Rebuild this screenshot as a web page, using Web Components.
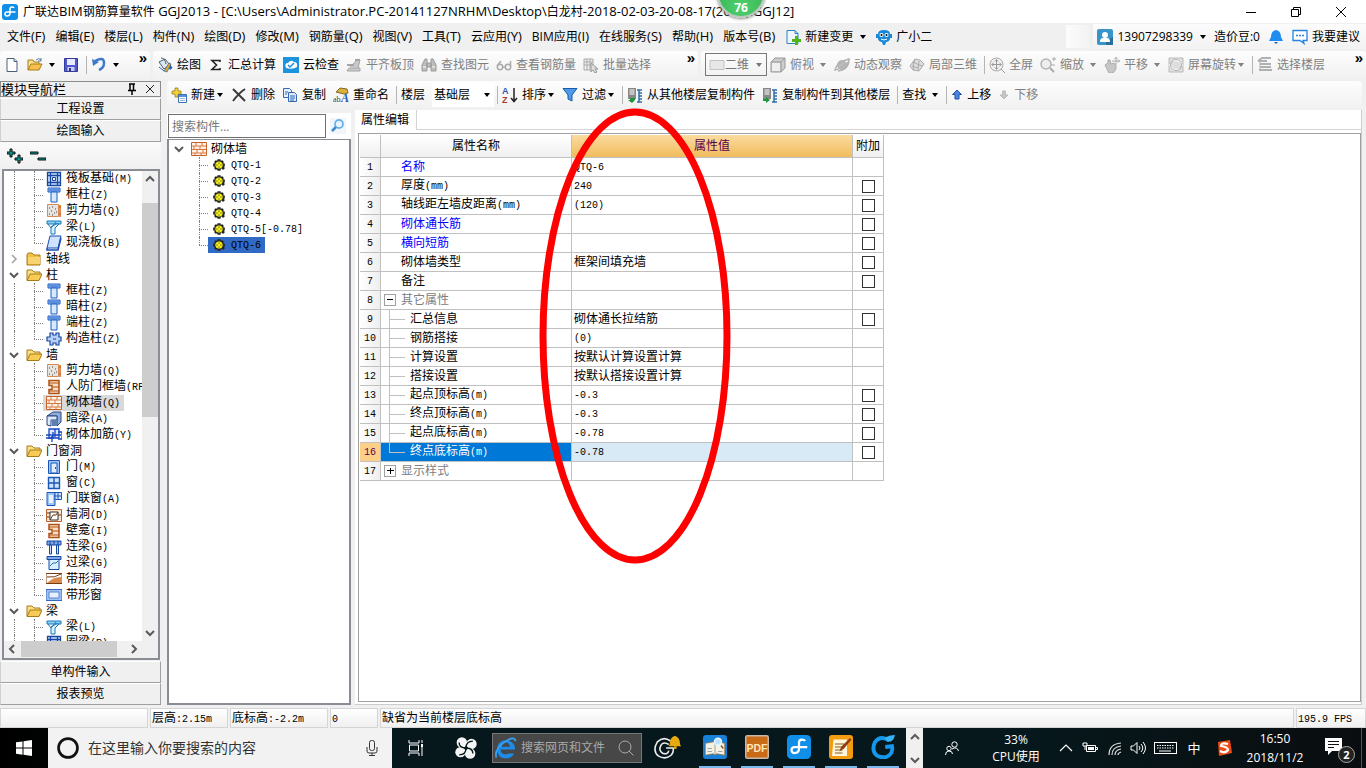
<!DOCTYPE html>
<html lang="zh-CN">
<head>
<meta charset="utf-8">
<title>广联达BIM钢筋算量软件 GGJ2013</title>
<style>
html, body { margin: 0; height: 100%; }
body { font: 12px/16px "Open Sans", "Noto Sans CJK SC", sans-serif; color: #000; background: #f0f0f0; overflow: hidden; }
</style>
</head>
<body>
<app-shell></app-shell>
<script>
const ARROW = (x, y, c = '#5a5a5a') => `<path d="M${x} ${y}l4 4 4-4" fill="none" stroke="${c}" stroke-width="2"/>`;
const COLUMN = '<path d="M2 1h12v4H2z" fill="#9cc0f5" stroke="#1f5fc4"/><path d="M5 5h6v10H5z" fill="#d8e8ff" stroke="#1f5fc4"/><path d="M3 3h10" stroke="#1f5fc4"/>';
const SHEET = '<path d="M1 1h8v11H1z" fill="#888"/><path d="M2.500 3h5M2.500 5h5M2.500 7h5" stroke="#fff"/><path d="M10 3h2v12h-2M12 3h3M12 6h3M12 9h3M12 12h3M12 15h3" fill="none" stroke="#2f6ea8" stroke-width="1.500"/>';
const ICONS = {
  logo: '<rect width="16" height="16" rx="3" fill="#0f8fe8"/><path d="M13.500 8H5a2 2 0 0 0 0 4q3 0 3-3V5q0-2 2-2 1.500 0 2 1" fill="none" stroke="#fff" stroke-width="1.500"/>',
  newdoc: '<path d="M3 1.500h7l3 3v10H3z" fill="#fff" stroke="#4b5f7d"/><path d="M10 1.500v3h3" fill="#dce6f5" stroke="#4b5f7d"/>',
  open: '<path d="M1 13V3h5l1 2h5v3" fill="#fbe08a" stroke="#a87d1c"/><path d="M1 13l3-6h11l-3 6z" fill="#f7c04c" stroke="#a87d1c"/><path d="M9 3q3-3 5 0M14 1v3h-3" fill="none" stroke="#5a7a9a"/>',
  save: '<path d="M1.500 1.500h13v13h-13z" fill="#5057c8" stroke="#343a9c"/><path d="M4 2h8v6H4z" fill="#e6eaff"/><path d="M4.500 10h7v4h-7z" fill="#c8ccf0"/><path d="M6 11h2v3H6z" fill="#2d327e"/>',
  undo: '<path d="M4 4q9-5 9 2 0 5-5 7" fill="none" stroke="#4079c9" stroke-width="2.500"/><path d="M1 2l1 7 6-4z" fill="#4079c9"/>',
  paint: '<path d="M2 5l6-3 5 6-6 4z" fill="#dce6ee" stroke="#4a5f70"/><path d="M4 1q4 0 5 6" fill="none" stroke="#4a5f70"/><path d="M13 8q3 3 1 4-3 1-1-4zM2 10l5 4" fill="#1d63c4" stroke="#1d63c4"/><path d="M7 14l5-8 2 1-4 8z" fill="#e1ab35" stroke="#2f5f9c" stroke-width=".7"/>',
  sigma: '<path d="M12 5V3.500H4l4.500 4.500L4 12.500h8V11" fill="none" stroke="#222" stroke-width="1.600"/>',
  cloud: '<rect width="16" height="16" fill="#1b93dd"/><path d="M3 11q-2-5 2-5 3-4 6-1 4 0 3 5-4 3-11 1z" fill="#fff"/><path d="M5 8l2 2 4-4" fill="none" stroke="#1b93dd" stroke-width="1.500"/>',
  level: '<path d="M1 14h13v-3H3zM4 10l8-8 2 1-2 8" fill="#c9c9c9" stroke="#a5a5a5"/><path d="M1 8h7M9 3h5" stroke="#a5a5a5" stroke-width="2"/>',
  find: '<path d="M1 14V8l3-6h2v12zM10 14V2h2l3 6v6zM6 6h4v4H6z" fill="#bdbdbd" stroke="#9a9a9a"/><path d="M2 10h3M11 10h3" stroke="#fff"/>',
  glasses: '<circle cx="4" cy="10" r="2.700" fill="none" stroke="#aaa" stroke-width="1.500"/><circle cx="12" cy="10" r="2.700" fill="none" stroke="#aaa" stroke-width="1.500"/><path d="M7 10h2M1 9l4-5M14.500 9V4" fill="none" stroke="#aaa" stroke-width="1.500"/>',
  batch: '<path d="M1 2h9v11H1zM1 5h9M1 8h9M4 2v11M7 2v11" fill="#eee" stroke="#aaa"/><path d="M8 6l7 6-3 0 2 3-2 1-2-3-2 2z" fill="#ddd" stroke="#999"/>',
  rect: '<path d="M1 3.500h14v9H1z" fill="#e7e7e7" stroke="#c2c2c2"/>',
  cube: '<path d="M1 5l4-4h10v10l-4 4H1z" fill="#cdcdcd" stroke="#999"/><path d="M1 5h10v10M11 5l4-4" fill="none" stroke="#999"/><path d="M2 6h8v8H2z" fill="#efefef"/>',
  orbit: '<circle cx="8" cy="8" r="5" fill="#bbb"/><path d="M1 13Q3 5 15 2q1 4-9 9-3 2-5 2zM4 14q9-1 11-9" fill="none" stroke="#b0b0b0" stroke-width="1.500"/>',
  grid3d: '<path d="M1 9l5-7 5 1 4 4-5 7-6-1z" fill="#dedede" stroke="#aaa"/><path d="M4 5l6 3 4 1M3 9l6 2M6 2l-2 7 1 4M10 4l-1 9" fill="none" stroke="#aaa"/>',
  full: '<circle cx="7.500" cy="7.500" r="6.500" fill="#f0f0f0" stroke="#aaa"/><path d="M7.500 3v9M3 7.500h9M6 4.500l1.500-2 1.500 2M6 10.500l1.500 2 1.500-2M4.500 6l-2 1.500 2 1.500M10.500 6l2 1.500-2 1.500M12 12l4 4" fill="none" stroke="#999"/>',
  zoom: '<circle cx="6" cy="7" r="5" fill="#eee" stroke="#b5b5b5" stroke-width="1.500"/><path d="M10 11l4 4" stroke="#aaa" stroke-width="2"/><path d="M12 2h4M14 0v4M11 8h4" stroke="#aaa"/>',
  pan: '<path d="M1 8l3-2v-3l2 0 1 4 3-1 2 3v3l-3 4H5z" fill="#c6c6c6" stroke="#aaa"/><path d="M12 0v8M8 4h8M10.500 2L12 .5 13.500 2M14 2.500L15.500 4 14 5.500" fill="none" stroke="#aaa"/>',
  rotate: '<path d="M1 1h14v14H1z" fill="#ddd" stroke="#bbb"/><path d="M5 4q5-3 8 2l1 3M11 12q-5 3-8-2L2 7" fill="none" stroke="#fff" stroke-width="2"/><circle cx="8" cy="8" r="5.500" fill="none" stroke="#aaa"/>',
  layers: '<path d="M1 4l4-3h9M1 4h9M3 7h11M3 10h11M2 13h13" fill="none" stroke="#b0b0b0" stroke-width="2"/><path d="M3 4v10" stroke="#b0b0b0"/>',
  add: '<path d="M4 1h3v3h3v3H7v3H4V7H1V4h3z" fill="#f2d23a" stroke="#9a7a10" stroke-width=".8"/><path d="M7.500 7.500h8v8h-8z" fill="#fff" stroke="#3f6fae"/><path d="M8 8h7v2H8z" fill="#5a91d8"/><path d="M9 11.500h5M9 13.500h5" stroke="#9ab5d8"/>',
  del: '<path d="M2 2l12 12M14 2Q8 6 2 14" fill="none" stroke="#3a3a3a" stroke-width="2"/>',
  copy: '<path d="M1.500 1.500h6l2 2v7h-8z" fill="#e8f1ff" stroke="#3566b4"/><path d="M6.500 5.500h6l2 2v7h-8z" fill="#dbe8ff" stroke="#3566b4"/><path d="M8 9h5M8 11h5M8 13h4M3 5h3M3 7h2" stroke="#3566b4"/>',
  rename: '<path d="M3 5l4-4 7 1 1 4-4 1z" fill="#d9b13f" stroke="#88651c"/><text x="0" y="15" font-size="8" font-family="Liberation Serif" fill="#444">ab</text><text x="8" y="15" font-size="12" font-weight="bold" font-style="italic" font-family="Liberation Serif" fill="#1c59b8">A</text>',
  sort: '<text x="0" y="7" font-size="9" font-weight="bold" font-family="Liberation Sans" fill="#3059b0">A</text><text x="0" y="16" font-size="9" font-weight="bold" font-family="Liberation Sans" fill="#a33b33">Z</text><path d="M12 1v13M9 11l3 3.500 3-3.500" fill="none" stroke="#222" stroke-width="1.500"/>',
  filter: '<path d="M1 1.500h14L10 8v6l-4-2V8z" fill="#4d9be8" stroke="#1b5ca8"/>',
  pull: SHEET + '<path d="M8 11v2l-3 3-4-3h2v-2z" fill="#20913c"/>',
  push: SHEET + '<path d="M1 12h3v-2l4 3-4 3v-2H1z" fill="#20913c"/>',
  up: '<path d="M6 3l4.500 4.500H8V12H4V7.500H1.500z" fill="#4a86e0" stroke="#1d4fa8"/>',
  down: '<path d="M6 12l4-4H7.500V4h-3v4H2z" fill="#c5c5c5" stroke="#bbb"/>',
  change: '<path d="M2 1.500h8l3 3v10H2z" fill="#eef7ff" stroke="#2a83c0"/><path d="M10 1.500v3h3" fill="none" stroke="#2a83c0"/><path d="M10 7h3v3h3v3h-3v3h-3v-3H7v-3h3z" fill="#52b513"/>',
  robot: '<path d="M2 5q0-4 6-4t6 4v5q-1 3-4 3l-1 3H7l-1-3q-3 0-4-3z" fill="#1787d9"/><path d="M0 5h2v4H0zM14 5h2v4h-2z" fill="#1787d9"/><circle cx="5.500" cy="6" r="2" fill="#fff"/><circle cx="10.500" cy="6" r="2" fill="#fff"/><circle cx="5.500" cy="6" r="1"/><circle cx="10.500" cy="6" r="1"/><path d="M5 10q3 2 6 0" fill="none" stroke="#fff"/>',
  user: '<rect width="16" height="16" rx="2" fill="#3795c9"/><path d="M9 12l7-4v8h-7z" fill="#27719c"/><circle cx="8" cy="6" r="3" fill="#fff"/><path d="M3 13q0-4 3-4h4q3 0 3 4z" fill="#fff"/>',
  bell: '<path d="M8 1q5 1 5 7l2 4H1l2-4Q3 2 8 1z" fill="#1f8cf0"/><path d="M6 13h4l-2 2z" fill="#1766b4"/>',
  bubble: '<path d="M1 1.500h14v10h-4l1 3-4-3H1z" fill="#fff" stroke="#2585e0" stroke-width="1.300"/><path d="M4 6.500h2M7 6.500h2M10 6.500h2" stroke="#2585e0" stroke-width="1.500"/>',
  plus2: '<path d="M3 1h2v3h3v2H5v3H3V6H0V4h3zM11 7h2v3h3v2h-3v3h-2v-3H8v-2h3z" fill="#0a9a92" stroke="#111"/>',
  minus2: '<path d="M0 4h8v2H0zM8 10h8v2H8z" fill="#0a9a92" stroke="#111"/>',
  pin: '<path d="M5 3h6M6 3v6M9.500 3v6M4 9.500h8M8 10v4" stroke="#000" stroke-width="1.500" fill="none"/>',
  close: '<path d="M4 4l8 8M12 4l-8 8" stroke="#222" fill="none"/>',
  search: '<circle cx="9" cy="6" r="4" fill="#e8f4ff" stroke="#6ab4e8" stroke-width="1.800"/><path d="M6 9l-4 4" stroke="#3b8bd0" stroke-width="2.500"/>',
  folder: '<path d="M1 4q0-2 2-2h3l2 2h6v10H1z" fill="#f1bf43" stroke="#a77b15"/><path d="M2 6h12v7H2z" fill="#f8d471"/>',
  folderopen: '<path d="M1 13V3h5l2 2h6v2" fill="#fbdf87" stroke="#a77b15"/><path d="M1 13.500L4 7h12l-3 6.500z" fill="#f7cb55" stroke="#a77b15"/>',
  raft: '<path d="M1.500 1.500h13v13h-13zM4.500 1v14M11.500 1v14M1 4.500h14M1 11.500h14" fill="#cfe2ff" stroke="#1747a0" stroke-width="1.300"/><path d="M6.500 6.500h3v3h-3z" fill="#fff" stroke="#1747a0"/>',
  column: COLUMN,
  shear: '<path d="M1.500 1.500h11v12h-11z" fill="#e8e4e0" stroke="#d88a55"/><path d="M3 5h1M6 4h1M9 6h1M5 8h1M8 10h1M3 11h1M10 9h1M6 12h1" stroke="#444"/><path d="M14 2v12M13 4h2M13 11h2" stroke="#d96a1c" stroke-width="1.500"/>',
  beam: '<path d="M1 2h14v3H1z" fill="#8bd0f5" stroke="#1d78b8"/><path d="M5 15V8l5-3h3L9 9v6z" fill="#d8f1ff" stroke="#1d78b8"/><path d="M2 5l3 4 5-6" fill="none" stroke="#1d78b8"/>',
  slab: '<path d="M4 1h11l-3 12H1z" fill="#cfe2ff" stroke="#1b4fb0"/><path d="M1 13v2h11l3-12" fill="none" stroke="#1b4fb0" stroke-width="1.500"/>',
  tiecol: '<path d="M4 2h3v2h3V2h3v4h2v4h-2v4h-3v-2H7v2H4v-4H1V6h3z" fill="#b8d0f8" stroke="#1747a0" stroke-width="1.200"/><path d="M7 8h3" stroke="#1747a0"/>',
  defwall: '<path d="M3 1.500h10v13H3v-4h3v-4H3z" fill="#f7dfc4" stroke="#b05012" stroke-width="1.500"/><path d="M3 4h10M7 8h6M3 12h10" stroke="#b05012"/>',
  brick: '<path d="M.5 1.500h15v13H.5z" fill="#fff3ea" stroke="#c4622a"/><path d="M1 5h14M1 8.500h14M1 12h14M5 2v3M11 2v3M3 5v3.500M9 5v3.500M6 9v3M12 9v3M4 12v2M10 12v2" stroke="#d9763c"/>',
  hbeam: '<path d="M1 5l6-4h8v10l-4 4V5z" fill="#8fadd8" stroke="#2b4780"/><path d="M1 5h10v4H5v6l-4-1z" fill="#dce9fb" stroke="#2b4780"/><path d="M6 9h5v6H6z" fill="#5f7fb0"/>',
  rebar: '<path d="M3 2h10v9H3z" fill="#dce9ff" stroke="#1747c0" stroke-width="1.300"/><path d="M0 11h7V5M6 15V8h9M9 2v8M0 8h5M12 5h4v7h-4" fill="none" stroke="#1747c0" stroke-width="1.300"/>',
  door: '<path d="M2.500 1.500h11v13h-11z" fill="#9cc4f8" stroke="#1b56b8"/><path d="M5 4h6v10H5z" fill="#e0edff" stroke="#1b56b8"/><path d="M9 8h1v2H9z" fill="#1b56b8"/>',
  window: '<path d="M2.500 2.500h11v11h-11zM8 2v12M2 8h12" fill="#cfe2ff" stroke="#1b56b8" stroke-width="1.400"/>',
  doorwin: '<path d="M1 1.500h8v13H1z" fill="#9cc4f8" stroke="#1b56b8"/><path d="M3 4h4v8H3z" fill="#e8f2ff"/><path d="M9 1.500h6.500v7H9zM12 2v6M9 5h6" fill="#cfe2ff" stroke="#1b56b8"/>',
  wallhole: '<path d="M.5 2.500h15v12H.5z" fill="#fbe4cf" stroke="#b5622e"/><path d="M4 5h8v8H4z" fill="#fff" stroke="#333"/><path d="M4 13l3-5h3l2-3M1 6h3M1 10h3M12 8h3" fill="none" stroke="#6b3410"/>',
  link: '<path d="M1 2h14v4H1z" fill="#7fa8ea" stroke="#1747a0"/><path d="M3.500 6h2v9h-2zM10.500 6h2v9h-2z" fill="#cfe2ff" stroke="#1747a0"/><path d="M4 2v4M8 2v4M12 2v4" stroke="#1747a0"/>',
  lintel: '<path d="M1 1.500h14v3H1z" fill="#7fa8ea" stroke="#1747a0"/><path d="M3 4.500h10v10H3z" fill="#d8f0ff" stroke="#1747a0"/><path d="M4 11l3-3h3l2-2" fill="none" stroke="#1d78b8"/>',
  striphole: '<path d="M0 2.500h16v10H0z" fill="#fff" stroke="#7a3a12"/><path d="M1 12q6-6 14-6v6z" fill="#d98a4b"/><path d="M1 6q8 1 14-3" stroke="#7a3a12" fill="none"/>',
  stripwin: '<path d="M0 2.500h16v11H0z" fill="#9cc0f0" stroke="#3a66c0"/><path d="M3 5h10v6H3z" fill="#e6f1ff" stroke="#5a86d0"/>',
  gear: '<path d="M7 3h2v10H7zM3 7h10v2H3zM4 5l1-1 8 7-1 1zM4 11l7-7 1 1-7 7z" fill="#f4ee19" stroke="#222" stroke-width="1.600" stroke-linejoin="round"/><circle cx="8" cy="8" r="3.600" fill="#f4ee19"/><path d="M7.500 5.500h1v1h-1zM5.500 7.500h1v1h-1zM9.500 7.500h1v1h-1zM7.500 9.500h1v1h-1z" fill="#222"/>',
  chevdown: ARROW(4, 6), chevup: '<path d="M4 10l4-4 4 4" fill="none" stroke="#5a5a5a" stroke-width="2"/>',
  chevleft: '<path d="M10 4L6 8l4 4" fill="none" stroke="#5a5a5a" stroke-width="2"/>', chevright: '<path d="M6 4l4 4-4 4" fill="none" stroke="#5a5a5a" stroke-width="2"/>',
  collapsed: '<path d="M6 4l4 4-4 4" fill="none" stroke="#a0a0a0" stroke-width="1.500"/>',
  min: '<path d="M3 8.500h10" stroke="#000"/>', max: '<path d="M3.500 5.500h7v7h-7zM5.500 5V3.500h7v7H11" fill="none" stroke="#000"/>', x: '<path d="M3 3l10 10M13 3L3 13" stroke="#000" fill="none"/>',
  start: '<path d="M0 2.300L6.500 1.400v6.200H0zM7.500 1.200L16 0v7.600H7.500zM0 8.500h6.500v6.200L0 13.800zM7.500 8.500H16V16l-8.500-1.200z" fill="#fff"/>',
  cortana: '<circle cx="8" cy="8" r="6.300" fill="none" stroke="#111" stroke-width="1.800"/>',
  mic: '<rect x="5.500" y=".5" width="5" height="10" rx="2" fill="none" stroke="#333"/><path d="M3 7v4q0 2 2 2h6q2 0 2-2V7M8 13v3M5 15.500h6" fill="none" stroke="#333"/>',
  taskview: '<path d="M1 0v3h10V0M1 16v-3h10v3M1.500 5h9v6h-9zM14 0v3M14 7v9" fill="none" stroke="#fff"/><path d="M13 4h2v3h-2z" fill="#fff"/>',
  swirl: '<circle cx="5" cy="4" r="3.800" fill="#f5f5f5"/><circle cx="12" cy="5" r="3.800" fill="#f5f5f5"/><circle cx="11" cy="12" r="3.800" fill="#f5f5f5"/><circle cx="4" cy="11" r="3.800" fill="#f5f5f5"/><path d="M8 8Q3 8 3 4M8 8q0-5 5-5M8 8q5 0 5 4M8 8q0 5-5 5" fill="none" stroke="#06171b"/>',
  ie: '<path d="M14.500 9H4q1 5 6 3l4 0q-3 5-9 3Q0 12 2 6q3-5 9-3 4 2 3.500 6zM5 7h6q-1-3-3-3-3 0-3 3z" fill="#1e8be8" fill-rule="evenodd"/><path d="M1 15Q-1 9 8 3q6-4 7 0" fill="none" stroke="#35a2f3" stroke-width="1.300"/>',
  mag: '<circle cx="7" cy="7" r="6" fill="none" stroke="#aaa"/><path d="M11 11l4.500 4.500" stroke="#aaa"/>',
  gbell: '<g fill="none" stroke="#eee" stroke-width=".9"><path d="M10 4Q6 1 2.500 4.500q-3 5 .5 8 4 2.500 7.500-.5 1.500-2 1-4H7.500"/><path d="M9 6Q6 4 4.500 6.500q-1.500 3 1 4.500 3 1 3.500-1.500"/></g><path d="M9.500 6q0-4 3-5 3 1 3 5l.5 1H9z" fill="#e7a90e"/><path d="M12 7h1.500v1.500H12z" fill="#e7a90e"/>',
  book: '<rect width="16" height="16" rx="2" fill="#1781da"/><path d="M1.500 5.500l5.500-1 1 1 1-1 5.500 1v8l-5.500-1-1 1-1-1-5.500 1z" fill="#f4f1e5" stroke="#8b6a34" stroke-width=".5"/><path d="M8 5v8M3 9h3M3 11h3M10 11h3" stroke="#888" stroke-width=".5"/><circle cx="10" cy="4.500" r="2.300" fill="#bde2ff" stroke="#e8f6ff"/><path d="M12 7l1.500 2" stroke="#a05a20"/>',
  pdf: '<rect x=".5" y=".5" width="15" height="15" rx="1" fill="#c96a16" stroke="#c8b8a8"/><text x="8" y="11" font-size="7" font-weight="bold" text-anchor="middle" font-family="Liberation Sans" fill="#ffe4bd">PDF</text>',
  note: '<rect width="16" height="16" rx="2" fill="#f59b12"/><path d="M3 3h9v11H2z" fill="#fff6dc"/><path d="M4 6h6M4 8h5M4 10h5M4 12h5" stroke="#8a5a1a" stroke-width=".8"/><path d="M7 11l1-3 6-6 1 1-5 6z" fill="#8d3d10"/>',
  glogo: '<path d="M12 3.500Q6 0 2.500 5q-2.500 6 2 9 6 2.500 9-2 1-2.500 .5-4.500l-4.500 .5" fill="none" stroke="#1597ec" stroke-width="2.600"/><path d="M9 2q3-2 7-2-1 5-5 4.500z" fill="#36b2f5"/>',
  people: '<g fill="none" stroke="#fff"><circle cx="10.500" cy="4.500" r="2.700"/><circle cx="5" cy="8.500" r="2.200"/><path d="M1.500 15q0-4 3.500-4t3.500 3M8 9q5-3 6.500 2"/></g>',
  tray: '<path d="M2 11l6-6 6 6" fill="none" stroke="#fff" stroke-width="1.200"/>',
  battery: '<path d="M4.500 5.500h9v6h-9zM14 7.500h1.500v2H14" fill="none" stroke="#fff"/><path d="M6 7h6v3H6z" fill="#fff"/><path d="M1 3v3h4V3M2 4V2M4 4V2M3 6v4" fill="none" stroke="#fff"/>',
  wifi: '<path d="M3 15Q3 4 15 3M6 15q0-8 9-9M9 15q0-5 6-6M12 15q0-2 3-3" fill="none" stroke="#ddd" stroke-width="1.200"/>',
  volume: '<path d="M1 6h2.500L7 2.500v11L3.500 10H1z" fill="none" stroke="#fff"/><path d="M9 6q2 2 0 4M11 4q3.500 4 0 8M13 2q5 6 0 12" fill="none" stroke="#fff"/>',
  sogou: '<path d="M2 2l12-2 2 13-13 3z" fill="#f04a14"/><path d="M12 4Q5 2 5 6q7 1 7 4-3 4-8 1" fill="none" stroke="#fff" stroke-width="2.200"/>',
};
const WIDE = {
  keyboard: ['0 0 24 16', '<rect x=".5" y="2.500" width="22" height="11" fill="none" stroke="#fff"/><path d="M3 5.500h17M3 8h17" stroke="#fff" stroke-width="1.200" stroke-dasharray="1.500 1"/><path d="M5 11h12" stroke="#fff"/>'],
  action: ['0 0 24 24', '<path d="M1 2h17v13H8l-4 4v-4H1z" fill="#fff"/><path d="M4 5.500h11M4 8.500h11M4 11.500h6" stroke="#111"/>'],
};

/* Registers an element whose shadow root is cloned from a template. */
function define(name, css, html, setup) {
  const tpl = document.createElement('template');
  tpl.innerHTML = `<style>*{box-sizing:border-box}button,input,select{font:inherit;color:inherit;margin:0}${css}</style>${typeof html === 'string' ? html : ''}`;
  customElements.define(name, class extends HTMLElement {
    constructor() { super(); this.attachShadow({ mode: 'open' }).append(tpl.content.cloneNode(true)); }
    connectedCallback() {
      if (this.ready) return;
      this.ready = true;
      if (typeof html === 'function') this.shadowRoot.append(document.createRange().createContextualFragment(html(this)));
      if (setup) setup(this);
    }
  });
}
/* Wraps the Latin runs of a label, which take another size than the CJK text. */
const latin = t => t.replace(/[\x20-\x7e]+/g, m => `<span class="l">${m}</span>`);
const SONG = '.l{font-family:"Liberation Mono",monospace;font-size:10px}';
const UI = '.l{font-size:13px}';

define('app-icon', ':host{display:block;flex:none;width:16px;height:16px}:host([size="24"]){width:24px;height:24px}:host([size="22"]){width:22px;height:22px}:host([size="28"]){width:28px;height:28px}:host([size="wide"]){width:24px;height:16px}:host([size="12"]){width:12px}svg{display:block;width:100%;height:100%}',
  e => { const n = e.getAttribute('name'), w = WIDE[n]; return `<svg viewBox="${w ? w[0] : e.getAttribute('size') === '12' ? '0 0 12 16' : '0 0 16 16'}" aria-hidden="true">${w ? w[1] : ICONS[n] || ''}</svg>`; });
const ic = (n, s) => `<app-icon name="${n}"${s ? ` size="${s}"` : ''}></app-icon>`;

define('title-bar', `:host{display:flex;height:23px;background:#fff;align-items:center;padding:0 3px 0 2px;position:relative}
.caption{margin-left:5px;flex:1;white-space:pre}${UI}
button{width:45px;height:22px;border:0;background:none;display:grid;place-items:center;padding:0}
.ball{position:absolute;left:717px;top:-30px;width:48px;height:48px;border-radius:50%;background:radial-gradient(circle at 50% 80%,#4fcf6d,#2ea94c);border:2px solid #b9c9bd;box-shadow:0 1px 3px #888;color:#fff;font-weight:bold;display:flex;align-items:flex-end;justify-content:center;z-index:2}`,
  `${ic('logo')}<span class="caption">${latin('广联达BIM钢筋算量软件 GGJ2013 - [C:\\Users\\Administrator.PC-20141127NRHM\\Desktop\\白龙村-2018-02-03-20-08-17(2664).GGJ12]')}</span>
<button aria-label="最小化">${ic('min')}</button><button aria-label="还原">${ic('max')}</button><button aria-label="关闭">${ic('x')}</button><div class="ball">76</div>`);

define('menu-bar', `:host{display:flex;height:27px;align-items:center;padding-left:7px;white-space:nowrap}
button{border:0;background:none;padding:0;height:24px;display:flex;align-items:center;gap:4px}
nav{display:flex;gap:10px;flex:1}
.caret{border:3px solid transparent;border-top:4px solid #000;border-bottom:0;margin:0 0 0 3px}
.blank{width:24px;height:23px;background:linear-gradient(90deg,#fcfcfc,#f2f2f2);margin-right:3px}
.acct{display:flex;gap:8px;height:25px;align-items:center;background:linear-gradient(#fcfcfc,#f2f2f2);padding:0 6px 0 4px}${UI}`,
  `<nav>${['文件(F)', '编辑(E)', '楼层(L)', '构件(N)', '绘图(D)', '修改(M)', '钢筋量(Q)', '视图(V)', '工具(T)', '云应用(Y)', 'BIM应用(I)', '在线服务(S)', '帮助(H)', '版本号(B)'].map(t => `<button><span>${t.replace(/\(.\)/, m => `<span class="l">${m}</span>`)}</span></button>`).join('')}
<button>${ic('change')}新建变更<i class="caret"></i></button><button>${ic('robot')}广小二</button></nav>
<div class="blank"></div><div class="acct"><button>${ic('user')}13907298339<i class="caret"></i></button><button>造价豆:0</button><button aria-label="通知">${ic('bell')}</button><button>${ic('bubble')}我要建议</button></div>`);

define('tool-bar', `:host{display:flex;align-items:center;background:linear-gradient(#fdfdfd,#f0f0f0);height:29px;white-space:nowrap;padding:0 0 2px 4px;border-radius:3px;box-sizing:border-box}
:host([grow]){flex:1}:host([more])::after{content:"»";font:bold 15px/14px "Liberation Sans",sans-serif;align-self:flex-start;margin:0 3px 0 auto}`, '<slot></slot>');
define('tool-sep', ':host{display:block;width:1px;height:18px;background:#b5b5b5;margin:0 4px 0 0;flex:none}', '');
define('tool-button', `:host{display:block;flex:none;margin-right:7px}:host([off]){color:#808080}
button{border:0;background:none;padding:0;display:flex;align-items:center;gap:4px;height:24px}
i{border:3px solid transparent;border-top:4px solid currentColor;border-bottom:0;margin:0 1px 0 -2px}
:host([menu="wide"]) i{margin-left:2px}`,
  e => `<button${e.textContent.trim() ? '' : ` aria-label="${e.getAttribute('label')}"`}>${e.hasAttribute('icon') ? ic(e.getAttribute('icon'), e.hasAttribute('slim') ? '12' : '') : ''}<slot></slot>${e.hasAttribute('menu') ? '<i></i>' : ''}</button>`);
define('tool-select', `:host{display:flex;align-items:center;flex:none;width:62px;height:24px;background:#fff;position:relative;margin-right:3px;padding:0 2px;box-sizing:border-box}
:host([icon]){background:none;border:1px solid #777;height:23px;color:#777;padding:0 2px 0 3px}
select{appearance:none;border:0;background:none;padding:0;flex:1;min-width:0;outline:0;opacity:1}
i{border:3px solid transparent;border-top:4px solid currentColor;border-bottom:0;margin:0 2px}`,
  e => `${e.hasAttribute('icon') ? ic(e.getAttribute('icon')) : ''}<select aria-label="${e.getAttribute('label')}"><option>${e.getAttribute('value')}</option></select><i></i>`);

define('scroll-bar', `:host{display:flex;flex-direction:column;background:#f0f0f0;width:16px}:host([horizontal]){flex-direction:row;width:auto;height:16px}
button{border:0;background:none;padding:0;flex:none;width:16px;height:16px}.thumb{background:#cdcdcd}`,
  e => { const h = e.hasAttribute('horizontal'), [a, b, c] = e.getAttribute('parts').split(' ');
    return `<button aria-label="向前滚动">${ic(h ? 'chevleft' : 'chevup')}</button><div style="flex:${a}"></div><div class="thumb" style="flex:${b}"></div><div style="flex:${c}"></div><button aria-label="向后滚动">${ic(h ? 'chevright' : 'chevdown')}</button>`; });

define('tree-row', `:host{display:flex;height:16px;align-items:center;white-space:nowrap;flex:none}
.a,.b{height:16px;flex:none;position:relative}.a{width:20px}.b{width:17px}
.v::before{content:"";position:absolute;left:8px;top:0;bottom:0;border-left:1px dotted #808080}
.b::after{content:"";position:absolute;left:8px;right:0;top:8px;border-top:1px dotted #808080}
.end::before{bottom:8px}
.label{display:flex;gap:4px;align-items:center;padding:0 4px 0 3px;height:16px}
.top .label{padding:0 4px 0 0}.row{display:flex}
.sel{background:var(--selected,#d9d9d9)}${SONG}`,
  e => { const top = e.hasAttribute('top'), t = latin(e.getAttribute('label'));
    return `<div class="row ${top ? 'top' : ''}" role="treeitem"><div class="a ${!top && e.hasAttribute('guide') ? 'v' : ''}">${top ? ic(e.hasAttribute('closed') ? 'collapsed' : 'chevdown') : ''}</div>${top ? '' : `<div class="b v ${e.hasAttribute('last') ? 'end' : ''}"></div>`}<div class="label ${e.hasAttribute('selected') ? 'sel' : ''}">${ic(e.getAttribute('icon'))}<span>${t}</span></div></div>`; });

const NAV = [['raft', '筏板基础(M)'], ['column', '框柱(Z)'], ['shear', '剪力墙(Q)'], ['beam', '梁(L)'], ['slab', '现浇板(B)', 'last'], ['folder', '轴线', 'top closed'], ['folderopen', '柱', 'top'],
  ['column', '框柱(Z)'], ['column', '暗柱(Z)'], ['column', '端柱(Z)'], ['tiecol', '构造柱(Z)', 'last'], ['folderopen', '墙', 'top'], ['shear', '剪力墙(Q)'], ['defwall', '人防门框墙(RF)'], ['brick', '砌体墙(Q)', 'selected'], ['hbeam', '暗梁(A)'], ['rebar', '砌体加筋(Y)', 'last'],
  ['folderopen', '门窗洞', 'top'], ['door', '门(M)'], ['window', '窗(C)'], ['doorwin', '门联窗(A)'], ['wallhole', '墙洞(D)'], ['defwall', '壁龛(I)'], ['link', '连梁(G)'], ['lintel', '过梁(G)'], ['striphole', '带形洞'], ['stripwin', '带形窗', 'last'],
  ['folderopen', '梁', 'top'], ['beam', '梁(L)'], ['raft', '圈梁(P)']];
const rows = (list, guide) => list.map(([i, t, f = '']) => `<tree-row icon="${i}" label="${t}" ${f} ${guide}></tree-row>`).join('');

define('nav-dock', `:host{display:flex;flex-direction:column;min-height:0;width:161px}
header{display:flex;height:16px;align-items:center;border:1px solid #8c8c8c;font-size:13px;line-height:14px;margin-bottom:1px;overflow:hidden}
header span{flex:1}header button,.strip button{border:0;background:none;padding:0;width:18px;height:16px}
.page{height:22px;border:1px solid #a0a0a0;border-top-color:#fff;border-left-color:#d0d0d0;background:#f0f0f0;padding:0;flex:none}
.strip{height:27px;background:linear-gradient(#fafafa,#f0f0f0);display:flex;gap:5px;align-items:center;padding-left:7px;flex:none}
.box{flex:1;min-height:0;margin:0 1px 1px 2px;border:2px solid #8a8d94;background:#f0f0f0;display:grid;grid-template:minmax(0,1fr) 17px/minmax(0,1fr) 16px}
.tree{overflow:hidden;background:#fff;padding-left:2px;display:flex;flex-direction:column}`,
  `<header><span>模块导航栏</span><button aria-label="固定">${ic('pin')}</button><button aria-label="关闭">${ic('close')}</button></header>
<button class="page">工程设置</button><button class="page">绘图输入</button>
<div class="strip"><button aria-label="全部展开">${ic('plus2')}</button><button aria-label="全部折叠">${ic('minus2')}</button></div>
<div class="box"><div class="tree" role="tree">${rows(NAV, 'guide')}</div><scroll-bar parts="16 214 208"></scroll-bar><scroll-bar horizontal parts="1 95 9"></scroll-bar></div>
<button class="page">单构件输入</button><button class="page">报表预览</button>`);

define('member-panel', `:host{display:flex;flex-direction:column;width:184px;background:#fff;margin-top:3px;--selected:#316ac5}
form{display:flex;height:26px;align-items:center;padding:0 5px 0 1px;gap:4px}
input{flex:1;min-width:0;height:24px;border:1px solid #707070;outline:0;padding:0 3px;background:#fff}input::placeholder{color:#777;opacity:1}
form button{border:0;background:#f2f6fa;padding:0;width:16px;height:16px}
.tree{flex:1;border:2px solid #8a8d94;border-width:1px 2px 2px;padding:1px 0 0 2px}`,
  `<form><input aria-label="搜索构件" placeholder="搜索构件…"><button type="button" aria-label="搜索">${ic('search')}</button></form>
<div class="tree" role="tree">${rows([['brick', '砌体墙', 'top'], ['gear', 'QTQ-1'], ['gear', 'QTQ-2'], ['gear', 'QTQ-3'], ['gear', 'QTQ-4'], ['gear', 'QTQ-5[-0.78]'], ['gear', 'QTQ-6', 'selected last']], '')}</div>`);

/* name, value, has checkbox, kind */
const PROPS = [['名称', 'QTQ-6', 0, 'blue'], ['厚度(mm)', '240', 1], ['轴线距左墙皮距离(mm)', '(120)', 1], ['砌体通长筋', '', 1, 'blue'], ['横向短筋', '', 1, 'blue'], ['砌体墙类型', '框架间填充墙', 1], ['备注', '', 1], ['其它属性', '', 0, 'group open'],
  ['汇总信息', '砌体通长拉结筋', 1, 'sub'], ['钢筋搭接', '(0)', 0, 'sub'], ['计算设置', '按默认计算设置计算', 0, 'sub'], ['搭接设置', '按默认搭接设置计算', 0, 'sub'], ['起点顶标高(m)', '-0.3', 1, 'sub'], ['终点顶标高(m)', '-0.3', 1, 'sub'], ['起点底标高(m)', '-0.78', 1, 'sub'], ['终点底标高(m)', '-0.78', 1, 'sub end current'], ['显示样式', '', 0, 'group']];
define('property-grid', `:host{display:block}
table{border-collapse:separate;border-spacing:0;table-layout:fixed;width:524px}
th,td{border:solid #c0c0c0;border-width:0 1px 1px 0;padding:0;font-weight:normal;height:19px;line-height:16px;white-space:nowrap;overflow:hidden}
thead th{height:23px;background:linear-gradient(#fff,#f0f0f0)}thead th.val{background:linear-gradient(#fbdba0,#f0bc5c);color:#5a0050}
tbody th{background:linear-gradient(90deg,#fff,#eee);text-align:center}
.name{padding-left:20px;position:relative}.value{padding-left:2px}.check{text-align:center;line-height:0}
.blue .name{color:#00f}.group .name{color:#808080}.sub .name{padding-left:29px}
.sub .name::before{content:"";position:absolute;left:8px;top:0;height:19px;border-left:1px solid #c0c0c0}
.sub .name::after{content:"";position:absolute;left:8px;top:9px;width:16px;border-top:1px solid #c0c0c0}
.end .name::before{height:9px}
.current th{background:#fdd08a;color:#5a0050}.current .name{background:#0078d7;color:#fff}.current .value{background:#d9eaf7}
input{appearance:none;width:13px;height:13px;border:1px solid #333;background:#fff;vertical-align:middle}
.fold{position:absolute;left:3px;top:3px;width:12px;height:12px;border:1px solid #a0a0a0;background:#fff;padding:0}
.fold::before,.group:not(.open) .fold::after{content:"";position:absolute;left:2px;top:4px;width:6px;height:2px;border-top:1px solid #000}
.group:not(.open) .fold::after{left:5px;top:2px;width:1px;height:6px;border:0;background:#000}
.group:not(.open) .fold::before{width:7px;top:4px}${SONG}`,
  `<table><colgroup><col style="width:21px"><col style="width:191px"><col style="width:281px"><col style="width:31px"></colgroup><thead><tr><th></th><th>属性名称</th><th class="val">属性值</th><th>附加</th></tr></thead><tbody>${PROPS.map(([n, v, c, k = ''], i) => `<tr class="${k}"><th scope="row">${latin(String(i + 1))}</th><td class="name">${k.includes('group') ? `<button class="fold" aria-label="展开或折叠${n}"></button>` : ''}${latin(n)}</td><td class="value">${latin(v)}</td><td class="check">${c ? `<input type="checkbox" aria-label="附加 ${n}">` : ''}</td></tr>`).join('')}</tbody></table>`);

define('property-panel', `:host{display:flex;flex-direction:column;flex:1;min-width:0;background:#fff;position:relative;border-right:1px solid #ccc;border-bottom:1px solid #ccc;padding:0 0 2px 3px}
.tabs{height:20px;border-bottom:1px solid #d5d5d5;flex:none;margin-bottom:3px}
.tabs button{border:0;border-right:1px solid #d5d5d5;background:#fff;height:20px;padding:0 7px 0 3px}
.frame{flex:1;border:1px solid #a0a0a0;padding:1px 0 0 1px}
svg{position:absolute;left:184px;top:-2px;width:192px;height:458px;pointer-events:none}`,
  `<div class="tabs" role="tablist"><button role="tab" aria-selected="true">属性编辑</button></div><div class="frame"><property-grid></property-grid></div>
<svg viewBox="0 0 192 458" aria-hidden="true"><ellipse cx="96" cy="228" rx="92" ry="224" fill="none" stroke="#f00" stroke-width="7"/></svg>`);

define('status-bar', `:host{display:flex;gap:2px;height:20px;flex:none}
div{border:1px solid #d5d5d5;background:linear-gradient(#fff,#f0f0f0);padding:1px;white-space:nowrap}${SONG}`,
  [[148, ''], [78, '层高:2.15m'], [98, '底标高:-2.2m'], [48, '0'], [0, '缺省为当前楼层底标高'], [70, '195.9 FPS']].map(([w, t]) => `<div style="flex:${w ? `none;width:${w}px` : '1'}">${latin(t)}</div>`).join(''));

define('task-bar', `:host{display:flex;height:40px;flex:none;background:linear-gradient(90deg,#000,#06181c 392px,#06181c 75%,#0a0d0f);color:#fff;align-items:stretch}
button{border:0;background:none;padding:0;display:grid;place-items:center;flex:none}
.start{width:48px}.find{flex:none;width:344px;background:#f2f2f2;color:#333;display:flex;align-items:center;gap:8px;padding:0 12px 0 8px;font-size:14px}
input{border:0;background:none;outline:0;flex:1;min-width:0;padding:0}input::placeholder{color:inherit;opacity:1}
.find input{color:#333}.w48{width:48px}.w52{width:52px}
.web{width:150px;height:30px;margin:5px 0;border:1px solid #777;background:#474747;color:#aaa;display:flex;align-items:center;gap:4px;padding:0 7px 0 2px;flex:none}
.bell{width:50px}.apps{display:flex;gap:10px;margin:0 7px}.apps button{width:32px;border-bottom:2px solid #76b9ed}
.band{width:17px;background:#f0f0f0;display:flex;flex-direction:column;justify-content:space-between}.band button{height:17px}
.people{width:58px}.cpu{width:70px;text-align:center;line-height:17px;padding-top:3px}
.tray{margin-left:auto;display:flex}.tray button{width:24px}.tray .k{width:31px}.tray .c{width:26px;font-size:13px}.tray .s{width:33px}.clock{width:70px;text-align:center;line-height:19px;padding-top:1px}
.tray .note{width:39px;margin:0 6px;position:relative}.note b{position:absolute;right:0;bottom:5px;width:17px;height:17px;border:1px solid #aaa;border-radius:50%;background:#222;font-size:11px;line-height:15px;text-align:center}.peek{border-left:1px solid #555;width:5px}`,
  `<button class="start" aria-label="开始">${ic('start')}</button><div class="find">${ic('cortana', '24')}<input aria-label="搜索 Windows" placeholder="在这里输入你要搜索的内容">${ic('mic')}</div>
<button class="w48" aria-label="任务视图">${ic('taskview')}</button><button class="w52" aria-label="浏览器">${ic('swirl', '22')}</button>
<div class="web">${ic('ie', '22')}<input aria-label="搜索网页和文件" placeholder="搜索网页和文件">${ic('mag')}</div>
<button class="bell" aria-label="提醒">${ic('gbell', '28')}</button>
<div class="apps">${['book', 'pdf', 'logo', 'note', 'glogo'].map((n, i) => `<button aria-label="应用 ${i + 1}">${ic(n, '24')}</button>`).join('')}</div>
<div class="band"><button aria-label="上翻">${ic('chevup')}</button><button aria-label="下翻">${ic('chevdown')}</button></div>
<button class="people" aria-label="人脉">${ic('people')}</button><div class="cpu">33%<br>CPU使用</div>
<div class="tray"><button aria-label="显示隐藏的图标">${ic('tray')}</button><button aria-label="电源">${ic('battery')}</button><button aria-label="网络">${ic('wifi')}</button><button aria-label="音量">${ic('volume')}</button><button class="k" aria-label="触摸键盘">${ic('keyboard', 'wide')}</button><button class="c">中</button><button class="s" aria-label="输入法">${ic('sogou')}</button><div class="clock">16:50<br>2018/11/2</div><button class="note" aria-label="操作中心">${ic('action', '24')}<b>2</b></button><div class="peek"></div></div>`);

define('app-shell', `:host{display:flex;flex-direction:column;height:100vh}
.bars{display:flex;gap:3px;padding:1px 0;flex:none}.b1{width:150px;flex:none}.b2{width:545px;flex:none}
.work{flex:1;min-height:0;display:flex;gap:6px;padding-bottom:3px}
.right{flex:1;min-width:0;display:flex;flex-direction:column;padding-right:4px}
.panels{flex:1;min-height:0;display:flex;gap:4px}`,
  `<title-bar></title-bar><menu-bar></menu-bar>
<div class="bars"><tool-bar class="b1" more><tool-button icon="newdoc" label="新建"></tool-button><tool-button icon="open" menu="wide" label="打开"></tool-button><tool-button icon="save" label="保存"></tool-button><tool-sep></tool-sep><tool-button icon="undo" menu="wide" label="撤销"></tool-button></tool-bar>
<tool-bar class="b2" more><tool-button icon="paint">绘图</tool-button><tool-button icon="sigma">汇总计算</tool-button><tool-button icon="cloud">云检查</tool-button><tool-button off icon="level">平齐板顶</tool-button><tool-button off icon="find">查找图元</tool-button><tool-button off icon="glasses">查看钢筋量</tool-button><tool-button off icon="batch">批量选择</tool-button></tool-bar>
<tool-bar grow more><tool-select icon="rect" label="视图维度" value="二维"></tool-select><tool-button off icon="cube" menu="wide">俯视</tool-button><tool-button off icon="orbit">动态观察</tool-button><tool-button off icon="grid3d">局部三维</tool-button><tool-sep></tool-sep><tool-button off icon="full">全屏</tool-button><tool-button off icon="zoom" menu="wide">缩放</tool-button><tool-button off icon="pan" menu="wide">平移</tool-button><tool-button off icon="rotate" menu>屏幕旋转</tool-button><tool-sep></tool-sep><tool-button off icon="layers">选择楼层</tool-button></tool-bar></div>
<div class="work"><nav-dock></nav-dock><div class="right">
<tool-bar><tool-button icon="add" menu>新建</tool-button><tool-button icon="del">删除</tool-button><tool-button icon="copy">复制</tool-button><tool-button icon="rename">重命名</tool-button><tool-sep></tool-sep><tool-button>楼层</tool-button><tool-select label="楼层" value="基础层"></tool-select><tool-sep></tool-sep><tool-button icon="sort" menu>排序</tool-button><tool-button icon="filter" menu>过滤</tool-button><tool-sep></tool-sep><tool-button icon="pull">从其他楼层复制构件</tool-button><tool-button icon="push">复制构件到其他楼层</tool-button><tool-sep></tool-sep><tool-button menu="wide">查找</tool-button><tool-sep></tool-sep><tool-button slim icon="up">上移</tool-button><tool-button slim off icon="down">下移</tool-button></tool-bar>
<div class="panels"><member-panel></member-panel><property-panel></property-panel></div></div></div>
<status-bar></status-bar><task-bar></task-bar>`);
</script>
</body>
</html>
